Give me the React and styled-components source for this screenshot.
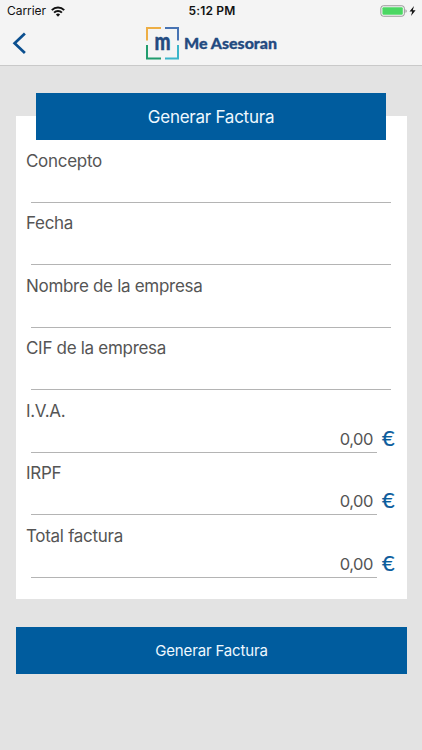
import { useState } from "react";
import styled, { createGlobalStyle } from "styled-components";

const GlobalStyle = createGlobalStyle`
  * {
    box-sizing: border-box;
  }

  body {
    margin: 0;
    background: #e3e3e3;
    font-family: Inter, "Liberation Sans", sans-serif;
  }
`;

const StyledScreen = styled.div`
  height: 750px;
  overflow: hidden;
  background: #e3e3e3;
`;

const StyledHeader = styled.header`
  height: 66px;
  background: #f4f4f4;
  border-bottom: 1px solid #c9c9c9;
`;

const StyledStatusBar = styled.div`
  height: 22px;
  padding: 0 5px 0 7px;
  display: grid;
  grid-template-columns: 1fr auto 1fr;
  align-items: center;
  color: #111;
  font-size: 12px;
  line-height: 22px;
`;

const StyledCarrier = styled.div`
  display: flex;
  align-items: center;
  gap: 5px;
  letter-spacing: -0.05px;
`;

const StyledTime = styled.div`
  font-weight: 600;
  letter-spacing: 0.2px;
`;

const StyledBattery = styled.div`
  display: flex;
  justify-content: flex-end;
  align-items: center;
`;

const StyledNavBar = styled.div`
  height: 42px;
  padding-left: 12px;
  display: flex;
  align-items: center;
`;

const StyledBackButton = styled.button`
  width: 16px;
  height: 24px;
  padding: 0;
  border: 0;
  background: none;
`;

const StyledLogo = styled.svg`
  margin-left: 117px;
`;

const StyledMain = styled.main`
  padding: 27px 15px 0 16px;
`;

const StyledTitle = styled.h1`
  position: relative;
  width: 350px;
  height: 47px;
  margin: 0 auto -24px 20px;
  background: #005c9e;
  color: #eef8ff;
  font-size: 17px;
  font-weight: 400;
  letter-spacing: -0.25px;
  line-height: 48px;
  text-align: center;
`;

const StyledCard = styled.div`
  height: 483px;
  padding: 33px 10px 0;
  background: #fff;
`;

const StyledField = styled.label`
  display: block;
  height: 62.45px;
`;

const StyledLabel = styled.span`
  display: block;
  height: 24px;
  color: #555;
  font-size: 17px;
  letter-spacing: -0.3px;
  line-height: 25px;
  white-space: nowrap;
`;

const StyledInputRow = styled.div`
  height: 30px;
  padding-left: 5px;
  display: flex;
`;

const StyledInput = styled.input`
  width: ${(props) => (props.$currency ? "346px" : "360px")};
  height: 30px;
  padding: 3px 4px 0 0;
  border: 0;
  border-bottom: 1px solid #b4b4b4;
  border-radius: 0;
  outline: 0;
  background: transparent;
  color: #555;
  font-family: inherit;
  font-size: 16.5px;
  letter-spacing: -0.45px;
  text-align: ${(props) => (props.$currency ? "right" : "left")};
`;

const StyledEuro = styled.span`
  margin-left: 5px;
  color: #0b5c9c;
  font-family: Lato, sans-serif;
  font-size: 22px;
  font-weight: 400;
  line-height: 29px;
  -webkit-text-stroke: 0.2px #0b5c9c;
`;

const StyledSubmit = styled.button`
  display: block;
  width: 391px;
  height: 47px;
  margin-top: 28px;
  padding: 0;
  border: 0;
  background: #005c9e;
  color: #eef8ff;
  font-family: inherit;
  font-size: 15px;
  letter-spacing: -0.15px;
  line-height: 47px;
`;

const fields = [
  { name: "concepto", label: "Concepto" },
  { name: "fecha", label: "Fecha" },
  { name: "empresa", label: "Nombre de la empresa" },
  { name: "cif", label: "CIF de la empresa" },
  { name: "iva", label: "I.V.A.", currency: true },
  { name: "irpf", label: "IRPF", currency: true },
  { name: "total", label: "Total factura", currency: true },
];

const WifiIcon = () => (
  <svg width="14" height="11" viewBox="0 0 14 11" fill="none" stroke="#111" strokeWidth="2">
    <path d="M0.8 4.1a8.8 8.8 0 0 1 12.4 0" />
    <path d="M3.1 6.6a5.5 5.5 0 0 1 7.8 0" />
    <path d="M7 10.7L4.9 8.5a3 3 0 0 1 4.2 0z" fill="#111" stroke="none" />
  </svg>
);

const BatteryIcon = () => (
  <svg width="37" height="12" viewBox="0 0 37 12">
    <rect x="0.9" y="0.8" width="23.4" height="10.4" rx="2.4" fill="#fff" stroke="#929292" />
    <rect x="2.4" y="2.3" width="20.4" height="7.4" rx="1" fill="#4bd763" />
    <path d="M25.5 4.2c1.6.4 1.6 3.2 0 3.6z" fill="#929292" />
    <path d="M34 1l-4.5 5.6h2.7L31 11l4.6-5.8h-2.8z" fill="#111" />
  </svg>
);

const Logo = () => (
  <StyledLogo width="134" height="36" viewBox="0 0 134 36">
    <g fill="none" strokeWidth="2">
      <path d="M2 15.5V3h14" stroke="#edae45" />
      <path d="M20 3h13v12.5" stroke="#4773b3" />
      <path d="M2 20v13.5h14" stroke="#219c6d" />
      <path d="M33 20v13.5H20" stroke="#3bb5ca" />
    </g>
    <g
      fill="#234a80"
      stroke="#234a80"
      strokeWidth="0.3"
      strokeLinejoin="round"
      fontFamily="Lato, sans-serif"
      fontWeight="900"
    >
      <text fontSize="17" textLength="16" lengthAdjust="spacingAndGlyphs" transform="translate(9.5 24.5) scale(1 1.4)">m</text>
      <text x="39" y="24" fontSize="14.5" textLength="93" lengthAdjust="spacingAndGlyphs">Me Asesoran</text>
    </g>
  </StyledLogo>
);

function App() {
  const [values, setValues] = useState({ iva: "0,00", irpf: "0,00", total: "0,00" });

  const inputHandler = (event) => {
    setValues({ ...values, [event.target.name]: event.target.value });
  };

  return (
    <StyledScreen>
      <GlobalStyle />
      <StyledHeader>
        <StyledStatusBar>
          <StyledCarrier>
            Carrier
            <WifiIcon />
          </StyledCarrier>
          <StyledTime>5:12 PM</StyledTime>
          <StyledBattery>
            <BatteryIcon />
          </StyledBattery>
        </StyledStatusBar>
        <StyledNavBar>
          <StyledBackButton>
            <svg width="16" height="24" viewBox="0 0 16 24" fill="none" stroke="#0b4f8f" strokeWidth="2.7">
              <path d="M12.9 2.5L2.6 12.3l10.3 9.8" />
            </svg>
          </StyledBackButton>
          <Logo />
        </StyledNavBar>
      </StyledHeader>
      <StyledMain>
        <StyledTitle>Generar Factura</StyledTitle>
        <StyledCard>
          {fields.map((field) => (
            <StyledField key={field.name}>
              <StyledLabel>{field.label}</StyledLabel>
              <StyledInputRow>
                <StyledInput
                  name={field.name}
                  value={values[field.name] || ""}
                  onChange={inputHandler}
                  $currency={field.currency}
                />
                {field.currency && <StyledEuro>€</StyledEuro>}
              </StyledInputRow>
            </StyledField>
          ))}
        </StyledCard>
        <StyledSubmit>Generar Factura</StyledSubmit>
      </StyledMain>
    </StyledScreen>
  );
}

export default App;
